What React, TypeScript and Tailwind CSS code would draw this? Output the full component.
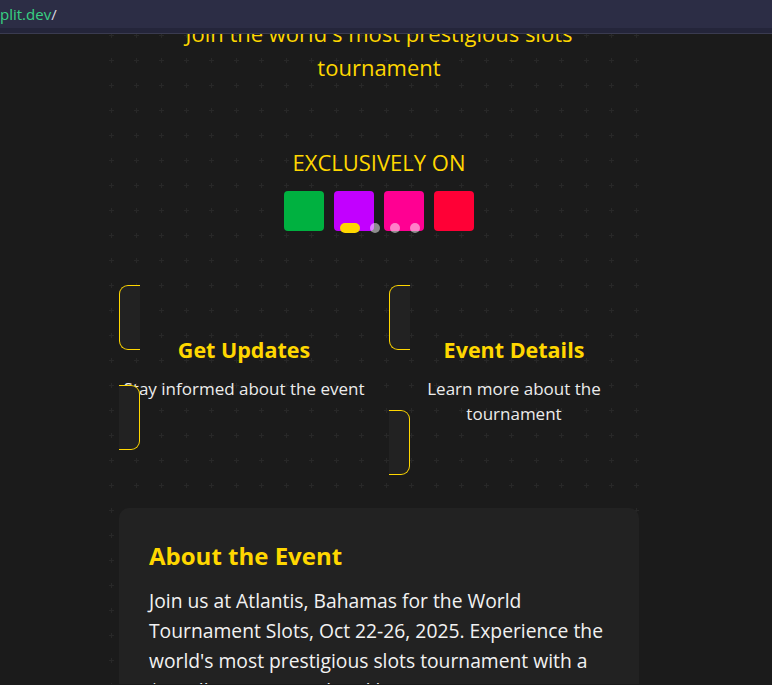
import React from "react"

type TypeCard = {
    titulo: string
    texto: string
}

const font = { fontFamily: '"Open Sans", "Noto Sans", sans-serif' }

const Card = ({ titulo, texto }: TypeCard) => {
    return (
        <div className="relative pt-[50px] pb-[49px] text-center">
            <h3 className="text-[21.5px] leading-[30px] font-bold text-[#ffd700]">{titulo}</h3>
            <p className="mt-[11px] text-[17px] leading-[25px] text-[#ececec]">{texto}</p>
            <span className="absolute top-0 left-0 w-[21px] h-[65px] rounded-l-[9px] border-y border-l border-[#ffd700] bg-[#222222]" />
            <span className="absolute bottom-0 left-0 w-[21px] h-[65px] rounded-r-[9px] border-y border-r border-[#ffd700] bg-[#222222]" />
        </div>
    )
}

const Plataformas = () => {
    const colores = ["bg-[#00b140]", "bg-[#c200ff]", "bg-[#ff0092]", "bg-[#ff0036]"]
    return (
        <div className="relative mt-[15px] flex justify-center gap-[10px]">
            {colores.map((c) => (
                <span key={c} className={`${c} w-10 h-10 rounded-[4px]`} />
            ))}
            <div className="absolute left-0 right-0 top-[32px] flex justify-center items-center gap-[10px] pl-[1px]">
                <span className="w-5 h-[10px] rounded-full bg-[#ffd700]" />
                <span className="w-[10px] h-[10px] rounded-full bg-white/50" />
                <span className="w-[10px] h-[10px] rounded-full bg-white/50" />
                <span className="w-[10px] h-[10px] rounded-full bg-white/50" />
            </div>
        </div>
    )
}

export default function App() {
    return (
        <div className="w-[772px] h-[685px] overflow-hidden bg-[#1b1b1b]" style={font}>
            <div className="h-[28px] bg-[#2c2d45] flex items-center text-[15px]">
                <span className="text-[#38d283]">plit.dev</span>
                <span className="text-[#d8d8e0]">/</span>
            </div>
            <div className="h-[6px] bg-[#24253a] border-b border-[#3a3b50]" />
            <div className="h-[650px] overflow-hidden flex justify-center pr-[14px]">
                <main className="relative w-[558px] px-[19px]">
                    <svg className="absolute inset-0 w-full h-full" aria-hidden="true">
                        <defs>
                            <pattern id="cruces" x="-1" y="-11" width="25" height="25" patternUnits="userSpaceOnUse">
                                <rect x="10" y="12" width="5" height="1" fill="#282828" />
                                <rect x="12" y="10" width="1" height="5" fill="#282828" />
                            </pattern>
                        </defs>
                        <rect width="100%" height="100%" fill="url(#cruces)" />
                    </svg>
                    <div className="relative">
                        <p className="-mt-[18px] mx-auto max-w-[448px] text-center text-[22px] leading-[34px] text-[#ffd700]">
                            Join the world's most prestigious slots tournament
                        </p>
                        <p className="mt-[64px] text-center text-[22px] leading-[28px] text-[#ffd700]">EXCLUSIVELY ON</p>
                        <Plataformas />
                        <div className="mt-[54px] grid grid-cols-2 gap-x-5 items-start">
                            <Card titulo="Get Updates" texto="Stay informed about the event" />
                            <Card titulo="Event Details" texto="Learn more about the tournament" />
                        </div>
                        <section className="mt-[33px] rounded-[10px] bg-[#222222] px-[30px] pt-[32px] pb-[30px]">
                            <h2 className="text-[24px] leading-[32px] font-bold text-[#ffd700]">About the Event</h2>
                            <p className="mt-[14px] text-[19.3px] leading-[30px] text-[#f2f2f2]">
                                Join us at Atlantis, Bahamas for the World Tournament Slots, Oct 22-26, 2025. Experience the world's most prestigious slots tournament with a $2 million prize pool and luxury resort amenities.
                            </p>
                        </section>
                    </div>
                </main>
            </div>
        </div>
    )
}
